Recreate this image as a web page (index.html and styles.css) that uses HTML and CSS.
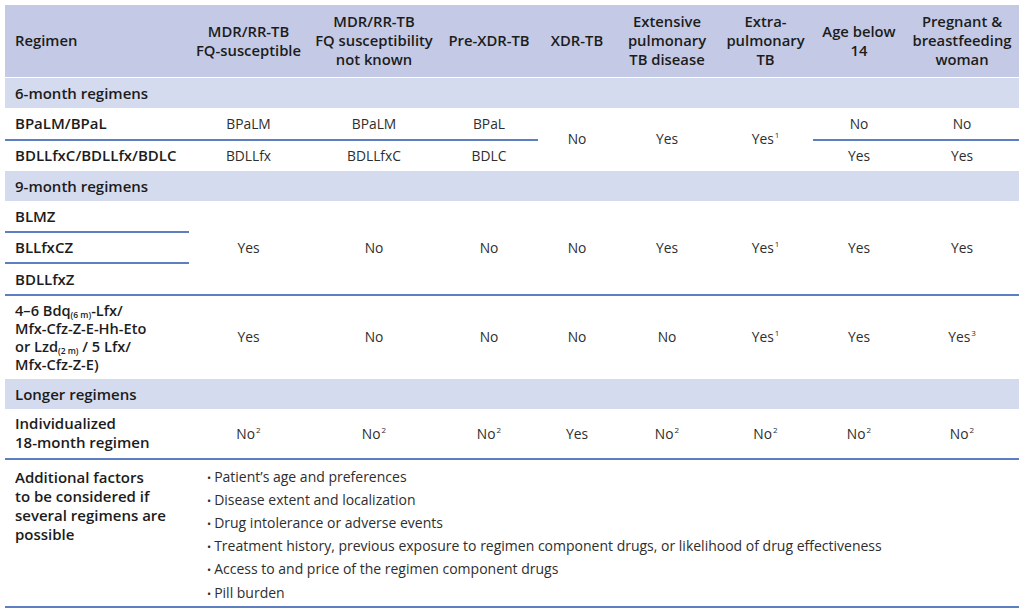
FILE: index.html
```html
<!DOCTYPE html>
<html lang="en">
<head>
<meta charset="utf-8">
<title>Regimen selection</title>
<link rel="stylesheet" href="styles.css">
</head>
<body>
<table class="regimens">
  <colgroup>
    <col class="c0"><col class="c1"><col class="c2"><col class="c3"><col class="c4"><col class="c5"><col class="c6"><col class="c7"><col class="c8">
  </colgroup>
  <thead>
    <tr class="head">
      <th class="left">Regimen</th>
      <th>MDR/RR-TB<br>FQ-susceptible</th>
      <th>MDR/RR-TB<br>FQ susceptibility<br>not known</th>
      <th>Pre-XDR-TB</th>
      <th>XDR-TB</th>
      <th>Extensive<br>pulmonary<br>TB disease</th>
      <th>Extra-<br>pulmonary<br>TB</th>
      <th>Age below<br>14</th>
      <th>Pregnant &amp;<br>breastfeeding<br>woman</th>
    </tr>
  </thead>
  <tbody>
    <tr class="band"><td colspan="9">6-month regimens</td></tr>
    <tr class="r32">
      <th class="name line">BPaLM/BPaL</th>
      <td class="line">BPaLM</td>
      <td class="line">BPaLM</td>
      <td class="line">BPaL</td>
      <td rowspan="2">No</td>
      <td rowspan="2">Yes</td>
      <td rowspan="2">Yes<sup>1</sup></td>
      <td class="line">No</td>
      <td class="line">No</td>
    </tr>
    <tr class="r31">
      <th class="name">BDLLfxC/BDLLfx/BDLC</th>
      <td>BDLLfx</td>
      <td>BDLLfxC</td>
      <td>BDLC</td>
      <td>Yes</td>
      <td>Yes</td>
    </tr>
    <tr class="band"><td colspan="9">9-month regimens</td></tr>
    <tr class="r31">
      <th class="name line">BLMZ</th>
      <td class="line" rowspan="3">Yes</td>
      <td class="line" rowspan="3">No</td>
      <td class="line" rowspan="3">No</td>
      <td class="line" rowspan="3">No</td>
      <td class="line" rowspan="3">Yes</td>
      <td class="line" rowspan="3">Yes<sup>1</sup></td>
      <td class="line" rowspan="3">Yes</td>
      <td class="line" rowspan="3">Yes</td>
    </tr>
    <tr class="r31"><th class="name line">BLLfxCZ</th></tr>
    <tr class="r32"><th class="name line">BDLLfxZ</th></tr>
    <tr class="r83">
      <th class="name tight">4–6 Bdq<sub>(6 m)</sub>-Lfx/<br>Mfx-Cfz-Z-E-Hh-Eto<br>or Lzd<sub>(2 m)</sub> / 5 Lfx/<br>Mfx-Cfz-Z-E)</th>
      <td>Yes</td>
      <td>No</td>
      <td>No</td>
      <td>No</td>
      <td>No</td>
      <td>Yes<sup>1</sup></td>
      <td>Yes</td>
      <td>Yes<sup>3</sup></td>
    </tr>
    <tr class="band"><td colspan="9">Longer regimens</td></tr>
    <tr class="r49">
      <th class="name line">Individualized<br>18-month regimen</th>
      <td class="line">No<sup>2</sup></td>
      <td class="line">No<sup>2</sup></td>
      <td class="line">No<sup>2</sup></td>
      <td class="line">Yes</td>
      <td class="line">No<sup>2</sup></td>
      <td class="line">No<sup>2</sup></td>
      <td class="line">No<sup>2</sup></td>
      <td class="line">No<sup>2</sup></td>
    </tr>
    <tr class="factors">
      <th class="name line top">Additional factors<br>to be considered if<br>several regimens are<br>possible</th>
      <td class="line list-cell" colspan="8">
        <ul class="factor-list">
          <li>Patient’s age and preferences</li>
          <li>Disease extent and localization</li>
          <li>Drug intolerance or adverse events</li>
          <li>Treatment history, previous exposure to regimen component drugs, or likelihood of drug effectiveness</li>
          <li>Access to and price of the regimen component drugs</li>
          <li>Pill burden</li>
        </ul>
      </td>
    </tr>
  </tbody>
</table>
</body>
</html>
```

FILE: styles.css
```css
html, body {
  margin: 0;
  padding: 0;
  background: #ffffff;
}

body {
  padding: 5px;
  font-family: "Open Sans", "Noto Sans", "Liberation Sans", sans-serif;
  color: #2b2b2b;
}

.regimens {
  width: 1014px;
  table-layout: fixed;
  border-collapse: collapse;
  font-size: 13.8px;
}

.c0 { width: 184px; }
.c1 { width: 119px; }
.c2 { width: 132px; }
.c3 { width: 98px; }
.c4 { width: 78px; }
.c5 { width: 102px; }
.c6 { width: 95px; }
.c7 { width: 92px; }
.c8 { width: 114px; }

.regimens td,
.regimens th {
  padding: 0 4px;
  vertical-align: middle;
  text-align: center;
}

.regimens td {
  font-weight: 400;
  color: #2e2e2e;
}

.head {
  height: 72px;
  background: #c4cae5;
}

.regimens .head th {
  font-weight: 600;
  font-size: 14.8px;
  line-height: 19px;
  color: #1c1c1c;
  padding: 0 1px;
}

.regimens .head th.left {
  text-align: left;
  padding-left: 10px;
}

.regimens .band td {
  height: 30px;
  background: #d5dbee;
  border-top: 1px solid #ffffff;
  text-align: left;
  padding-left: 10px;
  font-weight: 600;
  font-size: 15px;
  color: #1c1c1c;
}

.regimens th.name {
  text-align: left;
  padding-left: 10px;
  font-weight: 600;
  font-size: 15px;
  line-height: 19px;
  color: #1c1c1c;
}

.regimens th.tight {
  font-size: 14.6px;
  line-height: 18px;
}

.regimens th.top {
  vertical-align: top;
  padding-top: 8px;
}

.r31 { height: 31px; }
.r32 { height: 32px; }
.r49 { height: 50px; }
.r83 { height: 83px; }
.factors { height: 148px; }

.line {
  border-bottom: 2px solid #5d7ec0;
}

sup {
  font-size: 8px;
  vertical-align: 6px;
  line-height: 0;
  margin-left: 1px;
}

sub {
  font-size: 8.5px;
  vertical-align: -2px;
  line-height: 0;
}

.regimens td.list-cell {
  text-align: left;
  vertical-align: top;
  padding: 5px 0 2px 18px;
  font-size: 14px;
}

.factor-list {
  list-style: none;
  margin: 0;
  padding: 0;
}

.factor-list li {
  line-height: 23.2px;
  color: #2e2e2e;
}

.factor-list li::before {
  content: "•";
  margin-right: 3px;
  font-size: 11px;
  line-height: 0;
}
```
